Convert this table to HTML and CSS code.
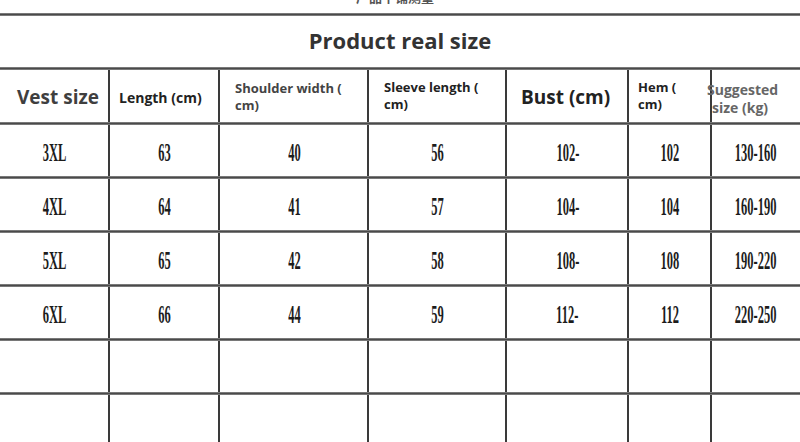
FILE: index.html
```html
<!DOCTYPE html>
<html>
<head>
<meta charset="utf-8">
<link rel="stylesheet" href="styles.css">
</head>
<body>
<div class="page">
  <div class="cap"><span class="cap-text">产品平铺测量</span></div>
  <div class="rule"></div>
  <div class="title">Product real size</div>
  <div class="rule"></div>
  <div class="row head">
    <div class="cell h-vest">Vest size</div>
    <div class="cell h-len">Length (cm)</div>
    <div class="cell h-sh">Shoulder width (<br>cm)</div>
    <div class="cell h-sl">Sleeve length (<br>cm)</div>
    <div class="cell h-bust">Bust (cm)</div>
    <div class="cell h-hem">Hem (<br>cm)</div>
    <div class="cell h-sug">Suggested<br>size (kg)</div>
  </div>
  <div class="rule"></div>
  <div class="row data">
    <div class="cell"><span class="num">3XL</span></div>
    <div class="cell"><span class="num">63</span></div>
    <div class="cell"><span class="num">40</span></div>
    <div class="cell"><span class="num">56</span></div>
    <div class="cell"><span class="num">102-</span></div>
    <div class="cell"><span class="num">102</span></div>
    <div class="cell"><span class="num">130-160</span></div>
  </div>
  <div class="rule"></div>
  <div class="row data">
    <div class="cell"><span class="num">4XL</span></div>
    <div class="cell"><span class="num">64</span></div>
    <div class="cell"><span class="num">41</span></div>
    <div class="cell"><span class="num">57</span></div>
    <div class="cell"><span class="num">104-</span></div>
    <div class="cell"><span class="num">104</span></div>
    <div class="cell"><span class="num">160-190</span></div>
  </div>
  <div class="rule"></div>
  <div class="row data">
    <div class="cell"><span class="num">5XL</span></div>
    <div class="cell"><span class="num">65</span></div>
    <div class="cell"><span class="num">42</span></div>
    <div class="cell"><span class="num">58</span></div>
    <div class="cell"><span class="num">108-</span></div>
    <div class="cell"><span class="num">108</span></div>
    <div class="cell"><span class="num">190-220</span></div>
  </div>
  <div class="rule"></div>
  <div class="row data">
    <div class="cell"><span class="num">6XL</span></div>
    <div class="cell"><span class="num">66</span></div>
    <div class="cell"><span class="num">44</span></div>
    <div class="cell"><span class="num">59</span></div>
    <div class="cell"><span class="num">112-</span></div>
    <div class="cell"><span class="num">112</span></div>
    <div class="cell"><span class="num">220-250</span></div>
  </div>
  <div class="rule"></div>
  <div class="row data">
    <div class="cell"></div><div class="cell"></div><div class="cell"></div><div class="cell"></div><div class="cell"></div><div class="cell"></div><div class="cell"></div>
  </div>
  <div class="rule"></div>
  <div class="row data">
    <div class="cell"></div><div class="cell"></div><div class="cell"></div><div class="cell"></div><div class="cell"></div><div class="cell"></div><div class="cell"></div>
  </div>
</div>
</body>
</html>
```

FILE: styles.css
```css
html, body {
  margin: 0;
  padding: 0;
  background: #fff;
}
body {
  width: 800px;
  height: 442px;
  overflow: hidden;
  font-family: "Open Sans", "Liberation Sans", sans-serif;
}
.page {
  display: flex;
  flex-direction: column;
  width: 800px;
}
.cap {
  height: 13px;
  overflow: hidden;
  display: flex;
  justify-content: center;
}
.cap-text {
  display: block;
  margin-top: -12px;
  margin-left: -10px;
  font-family: "Noto Sans CJK SC", sans-serif;
  font-weight: 700;
  font-size: 13px;
  line-height: 18px;
  color: #555;
}
.rule {
  height: 3px;
  background: linear-gradient(#9a9a9a, #4a4a4a 40%, #4a4a4a 60%, #9a9a9a);
  flex: none;
}
.title {
  height: 51px;
  display: flex;
  align-items: center;
  justify-content: center;
  font-weight: 700;
  font-size: 22px;
  color: #333;
  padding-bottom: 3px;
  box-sizing: border-box;
}
.row {
  display: grid;
  grid-template-columns: 109px 110px 149px 138px 122px 83px 89px;
  flex: none;
}
.head {
  height: 52px;
}
.data {
  height: 51px;
}
.cell {
  border-left: 2px solid #3a3a3a;
  margin-left: -1px;
  box-sizing: border-box;
}
.cell:first-child {
  border-left: none;
  margin-left: 0;
}
.head .cell {
  font-weight: 700;
  font-size: 13px;
  line-height: 17px;
  color: #222;
  display: flex;
  align-items: center;
}
.head .h-vest {
  font-size: 19px;
  color: #3f3f3f;
  padding-left: 17px;
  padding-top: 3px;
}
.head .h-len {
  font-size: 14px;
  padding-left: 9px;
  padding-top: 3px;
}
.head .h-sh {
  color: #444;
  padding-left: 15px;
  align-items: flex-start;
  padding-top: 10px;
}
.head .h-sl {
  padding-left: 15px;
  align-items: flex-start;
  padding-top: 9px;
}
.head .h-bust {
  font-size: 19px;
  padding-left: 14px;
  padding-top: 3px;
}
.head .h-hem {
  padding-left: 9px;
  align-items: flex-start;
  padding-top: 9px;
}
.head .h-sug {
  font-size: 14px;
  line-height: 18px;
  color: #666;
  align-items: flex-start;
  padding-top: 11px;
  text-indent: -5px;
  white-space: nowrap;
}
.data .cell {
  display: flex;
  align-items: center;
  justify-content: center;
}
.num {
  display: inline-block;
  font-family: "Liberation Serif", "Times New Roman", serif;
  font-weight: 700;
  font-size: 25px;
  color: #1c1c1c;
  transform: scaleX(0.5);
  white-space: nowrap;
  padding-top: 4px;
}
```
